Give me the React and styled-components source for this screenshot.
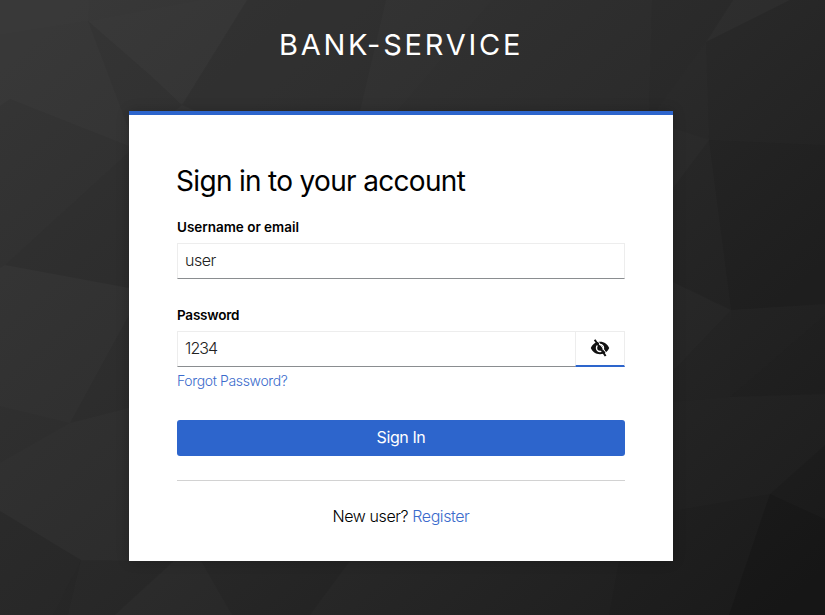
import React from "react";
import styled, { createGlobalStyle } from "styled-components";

const GlobalStyle = createGlobalStyle`
  *, *::before, *::after { box-sizing: border-box; }
  html, body { margin: 0; padding: 0; background: #2a2a2a; }
  body { font-family: Inter, "Open Sans", sans-serif; font-size: 16px; color: #151515; }
`;

const Page = styled.div`
  display: grid;
  grid-template: 100vh / 100%;
  overflow: hidden;
  > * { grid-area: 1 / 1; }
`;

const Backdrop = styled.svg`
  width: 100%;
  height: 100%;
  display: block;
`;

const Content = styled.div`
  z-index: 1;
  display: flex;
  flex-direction: column;
  align-items: center;
  padding-right: 23px;
`;

const Realm = styled.header`
  width: 544px;
  height: 111px;
  padding-top: 23px;
  text-align: center;
  text-transform: uppercase;
  color: #fff;
  font-size: 29px;
  font-weight: 400;
  line-height: 44px;
  letter-spacing: 2.75px;
  white-space: nowrap;
`;

const Card = styled.main`
  width: 544px;
  height: 450px;
  padding: 48px 48px 0;
  border-top: 4px solid #2d65cc;
  background: #fff;
  box-shadow: 0 0 12px rgba(0, 0, 0, 0.2);
  display: flex;
  flex-direction: column;
`;

const Title = styled.h1`
  margin: 0 0 0 -1px;
  height: 36px;
  font-size: 28px;
  font-weight: 430;
  line-height: 36px;
  letter-spacing: ${(p) => p.$spacing}px;
  color: #000;
  white-space: nowrap;
`;

const Field = styled.div`
  display: flex;
  flex-direction: column;
  margin-top: ${(p) => p.$top}px;
`;

const Label = styled.label`
  height: 26px;
  line-height: 20px;
  font-size: 13.5px;
  font-weight: 600;
  letter-spacing: ${(p) => p.$spacing}px;
  color: #000;
`;

const InputRow = styled.div`
  display: flex;
  height: 36px;
`;

const Input = styled.input`
  flex: 1;
  min-width: 0;
  height: 36px;
  padding: 0 7px 2px;
  border: 1px solid #ededed;
  border-right-width: ${(p) => (p.$joined ? 0 : 1)}px;
  border-bottom-color: #8a8d90;
  border-radius: 0;
  outline: none;
  background: #fff;
  color: #222;
  font: 350 16px Inter, "Open Sans", sans-serif;
  letter-spacing: ${(p) => p.$spacing || 0}px;
`;

const Toggle = styled.button`
  width: 50px;
  height: 36px;
  padding: 0 0 1px;
  display: flex;
  align-items: center;
  justify-content: center;
  background: #fff;
  border: 1px solid #ededed;
  border-bottom: 2px solid #2d65cc;
  color: #111;
`;

const Link = styled.a`
  color: #3b6bcc;
  text-decoration: none;
`;

const Forgot = styled.div`
  height: 21px;
  margin-top: 3px;
  font-size: 14px;
  font-weight: 350;
  line-height: 21px;
  letter-spacing: -0.36px;
`;

const Submit = styled.button`
  height: 36px;
  margin-top: 29px;
  padding: 0 0 2px;
  border: 0;
  border-radius: 3px;
  background: #2d65cc;
  color: #fff;
  font: 400 16px Inter, "Open Sans", sans-serif;
  letter-spacing: -0.4px;
`;

const Register = styled.footer`
  margin-top: 24px;
  padding-top: 23px;
  border-top: 1px solid #d2d2d2;
  text-align: center;
  font-weight: 350;
  line-height: 24px;
  letter-spacing: -0.42px;
  color: #000;
`;

const facets = [
  ["0,0 90,0 88,21 0,35", "#fff", 0.007],
  ["0,35 88,21 10,99 0,106", "#fff", 0.004],
  ["88,21 199,0 247,0 182,105 150,75", "#fff", 0.009],
  ["88,21 150,75 182,105 170,115 129,130", "#000", 0.05],
  ["88,21 10,99 129,146 127,128", "#fff", 0.005],
  ["10,99 129,146 129,152 5,265 0,268 0,106", "#000", 0.05],
  ["5,265 129,152 129,288", "#000", 0.09],
  ["5,265 129,288 129,315 70,423 0,406 0,268", "#fff", 0.002],
  ["129,315 70,423 129,408", "#000", 0.06],
  ["0,406 70,423 0,463", "#000", 0.03],
  ["70,423 129,480 129,556 81,560", "#fff", 0.004],
  ["0,463 70,423 81,560 0,511", "#fff", 0.002],
  ["0,511 81,560 53,615 0,615", "#000", 0.1],
  ["81,560 68,615 53,615", "#000", 0.13],
  ["81,560 174,561 115,615 68,615", "#000", 0.07],
  ["201,561 232,615 310,615 350,561", "#000", 0.06],
  ["350,561 310,615 470,615 478,561", "#fff", 0.004],
  ["247,0 386,0 360,111 195,111 182,105", "#000", 0.06],
  ["386,0 492,0 397,111 360,111", "#fff", 0.005],
  ["492,0 652,0 649,111 397,111", "#000", 0.02],
  ["652,0 733,0 706,42 656,111 649,111", "#000", 0.05],
  ["733,0 790,0 706,42", "#fff", 0.008],
  ["790,0 825,0 825,145 709,140 706,42", "#000", 0.08],
  ["706,42 709,140 673,128 656,111", "#000", 0.03],
  ["673,128 709,140 673,188", "#fff", 0.002],
  ["709,140 825,145 825,304 731,310", "#000", 0.14],
  ["673,188 709,140 731,310 673,282", "#000", 0.06],
  ["673,282 731,310 673,371", "#fff", 0.006],
  ["731,310 730,397 673,402 673,371", "#000", 0.02],
  ["731,310 825,304 825,315 730,397", "#000", 0.04],
  ["825,315 730,397 825,394", "#000", 0.08],
  ["673,402 730,397 825,394 825,445 770,494 673,511", "#fff", 0.004],
  ["770,494 825,445 825,519", "#000", 0.07],
  ["673,511 770,494 729,615 609,615 619,561 673,561", "#000", 0.06],
  ["770,494 825,519 825,615 729,615", "#000", 0.18],
];

function LowPoly() {
  return (
    <Backdrop viewBox="0 0 825 615" preserveAspectRatio="none" aria-hidden="true">
      <defs>
        <linearGradient id="shade" gradientUnits="userSpaceOnUse" x1="80" y1="0" x2="690" y2="690">
          <stop offset="0" stopColor="#383838" />
          <stop offset="0.5" stopColor="#2c2c2c" />
          <stop offset="1" stopColor="#1c1c1c" />
        </linearGradient>
      </defs>
      <rect width="825" height="615" fill="url(#shade)" />
      {facets.map(([points, fill, opacity]) => (
        <polygon key={points} points={points} fill={fill} fillOpacity={opacity} />
      ))}
    </Backdrop>
  );
}

function EyeOff() {
  return (
    <svg width="20" height="18" viewBox="0 0 20 18" aria-hidden="true">
      <path
        fillRule="evenodd"
        fill="currentColor"
        d="M10 2.800C5.600 2.800 2.300 5.400 0.800 9c1.500 3.600 4.800 6.200 9.200 6.200S17.700 12.600 19.200 9C17.700 5.400 14.400 2.800 10 2.800ZM10 4.800a4.200 4.200 0 1 1 0 8.400 4.200 4.200 0 0 1 0-8.400ZM10 6.200a2.800 2.800 0 1 0 0 5.600 2.800 2.800 0 0 0 0-5.600Z"
      />
      <path d="M6.600 0.200L17.600 16" stroke="#fff" strokeWidth="1" />
      <path d="M4.700 0.800L15.600 17" stroke="currentColor" strokeWidth="2" />
    </svg>
  );
}

export default function App() {
  return (
    <>
      <GlobalStyle />
      <Page>
        <LowPoly />
        <Content>
          <Realm>bank-service</Realm>
          <Card>
            <Title $spacing={-0.68}>Sign in to your account</Title>
            <Field $top={18}>
              <Label htmlFor="username" $spacing={-0.02}>Username or email</Label>
              <InputRow>
                <Input id="username" defaultValue="user" $spacing={-0.5} />
              </InputRow>
            </Field>
            <Field $top={26}>
              <Label htmlFor="password" $spacing={-0.22}>Password</Label>
              <InputRow>
                <Input id="password" defaultValue="1234" $joined $spacing={-0.9} />
                <Toggle type="button" aria-label="Hide password">
                  <EyeOff />
                </Toggle>
              </InputRow>
              <Forgot><Link href="#">Forgot Password?</Link></Forgot>
            </Field>
            <Submit type="button">Sign In</Submit>
            <Register>New user? <Link href="#">Register</Link></Register>
          </Card>
        </Content>
      </Page>
    </>
  );
}
